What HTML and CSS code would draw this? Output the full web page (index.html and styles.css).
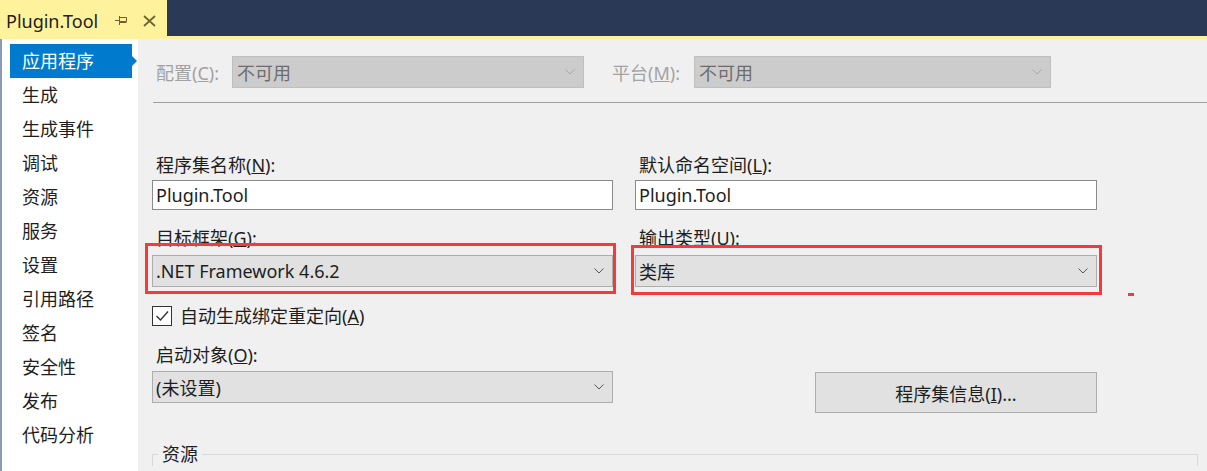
FILE: index.html
```html
<!DOCTYPE html>
<html lang="zh-CN">
<head>
    <meta charset="UTF-8">
    <title>Plugin.Tool</title>
    <link rel="stylesheet" href="styles.css">
</head>
<body>

<div class="titlebar">
    <div class="doc-tab">
        <span class="doc-tab-title">Plugin.Tool</span>
        <svg class="doc-tab-pin" width="13" height="11" viewBox="0 0 13 11">
            <path d="M0 5.5h4.5 M4.5 1v9 M4.5 2.5h7v4h-7 M4.5 7.5h7" fill="none" stroke="#6f6032" stroke-width="1"/>
        </svg>
        <svg class="doc-tab-close" width="13" height="12" viewBox="0 0 13 12">
            <path d="M1 1l11 10 M12 1l-11 10" fill="none" stroke="#6f6032" stroke-width="1.7"/>
        </svg>
    </div>
</div>
<div class="tab-strip"></div>

<div class="workspace">
    <ul class="nav">
        <li class="active">应用程序</li>
        <li>生成</li>
        <li>生成事件</li>
        <li>调试</li>
        <li>资源</li>
        <li>服务</li>
        <li>设置</li>
        <li>引用路径</li>
        <li>签名</li>
        <li>安全性</li>
        <li>发布</li>
        <li>代码分析</li>
    </ul>

    <div class="page">
        <div class="config-row">
            <span class="config-label">配置(<u>C</u>):</span>
            <div class="combo disabled config-combo">
                <span>不可用</span>
                <svg class="chevron" width="10" height="6" viewBox="0 0 10 6"><path d="M0.5 0.5l4.5 4.5 4.5-4.5" fill="none" stroke="#a8a8a8"/></svg>
            </div>
            <span class="config-label second">平台(<u>M</u>):</span>
            <div class="combo disabled platform-combo">
                <span>不可用</span>
                <svg class="chevron" width="10" height="6" viewBox="0 0 10 6"><path d="M0.5 0.5l4.5 4.5 4.5-4.5" fill="none" stroke="#a8a8a8"/></svg>
            </div>
        </div>
        <div class="rule"></div>

        <div class="form-grid">
            <div class="field">
                <label class="field-label" for="asmName">程序集名称(<u>N</u>):</label>
                <input class="text-input" type="text" id="asmName" value="Plugin.Tool">
            </div>
            <div class="field">
                <label class="field-label" for="rootNs">默认命名空间(<u>L</u>):</label>
                <input class="text-input" type="text" id="rootNs" value="Plugin.Tool">
            </div>

            <div class="field row-two marked">
                <span class="field-label">目标框架(<u>G</u>):</span>
                <div class="combo">
                    <span>.NET Framework 4.6.2</span>
                    <svg class="chevron" width="10" height="6" viewBox="0 0 10 6"><path d="M0.5 0.5l4.5 4.5 4.5-4.5" fill="none" stroke="#555"/></svg>
                </div>
                <span class="mark mark-left"></span>
            </div>
            <div class="field row-two marked">
                <span class="field-label">输出类型(<u>U</u>):</span>
                <div class="combo">
                    <span>类库</span>
                    <svg class="chevron" width="10" height="6" viewBox="0 0 10 6"><path d="M0.5 0.5l4.5 4.5 4.5-4.5" fill="none" stroke="#555"/></svg>
                </div>
                <span class="mark mark-right"></span>
            </div>

            <div class="field">
                <div class="check-row">
                    <span class="check-box">
                        <svg width="18" height="18" viewBox="0 0 18 18"><path d="M3.5 9l4 4 7.5-8.5" fill="none" stroke="#333" stroke-width="1.4"/></svg>
                    </span>
                    <span class="check-label">自动生成绑定重定向(<u>A</u>)</span>
                </div>
                <span class="field-label startup-label">启动对象(<u>O</u>):</span>
                <div class="combo startup-combo">
                    <span>(未设置)</span>
                    <svg class="chevron" width="10" height="6" viewBox="0 0 10 6"><path d="M0.5 0.5l4.5 4.5 4.5-4.5" fill="none" stroke="#555"/></svg>
                </div>
            </div>
            <div class="field btn-cell">
                <button class="btn">程序集信息(<u>I</u>)...</button>
            </div>
        </div>

        <fieldset class="group">
            <legend>资源</legend>
        </fieldset>

        <span class="stray-mark"></span>
    </div>
</div>

</body>
</html>
```

FILE: styles.css
```css
body {
    margin: 0;
    width: 1207px;
    height: 471px;
    overflow: hidden;
    background: #f0f0f0;
    color: #1e1e1e;
    font-family: "Noto Sans", "Noto Sans CJK SC", sans-serif;
    font-size: 18px;
}

/* title bar + document tab */
.titlebar {
    display: flex;
    height: 36px;
    background: #2a3a56;
}
.doc-tab {
    display: flex;
    align-items: center;
    box-sizing: border-box;
    width: 167px;
    padding: 5px 0 0 6px;
    background: #fff29d;
}
.doc-tab-title {
    line-height: 24px;
}
.doc-tab-pin {
    margin-left: 17px;
}
.doc-tab-close {
    margin-left: 15px;
}
.tab-strip {
    height: 3px;
    background: #fff29d;
}

.workspace {
    display: flex;
    height: 432px;
    overflow: hidden;
}

/* left navigation */
.nav {
    flex: none;
    width: 136px;
    margin: 0;
    padding: 5px 0 0;
    list-style: none;
    border-left: 2px solid #8d99bb;
    background: #fff;
}
.nav li {
    box-sizing: border-box;
    width: 122px;
    height: 34px;
    margin-left: 8px;
    padding-left: 12px;
    line-height: 34px;
}
.nav .active {
    position: relative;
    background: #007acc;
    color: #fff;
}
.nav .active::after {
    content: "";
    position: absolute;
    left: 100%;
    top: 12px;
    border-left: 5px solid #007acc;
    border-top: 5px solid transparent;
    border-bottom: 5px solid transparent;
}

/* property page */
.page {
    position: relative;
    flex: 1;
    padding: 17px 9px 0 14px;
}

.config-row {
    display: flex;
    align-items: center;
    height: 32px;
}
.config-label {
    box-sizing: border-box;
    width: 80px;
    padding-left: 4px;
    color: #a2a2a2;
}
.config-label.second {
    width: 82px;
    margin-left: 28px;
    padding-left: 0;
}
.config-combo {
    width: 352px;
}
.platform-combo {
    width: 357px;
}

.rule {
    height: 1px;
    margin: 14px -9px 0 1px;
    background: #a0a0a0;
}

.combo {
    display: flex;
    align-items: center;
    justify-content: space-between;
    box-sizing: border-box;
    height: 32px;
    padding: 0 8px 0 3px;
    border: 1px solid #adadad;
    background: #e1e1e1;
}
.combo.disabled {
    padding-left: 4px;
    border-color: #bfbfbf;
    background: #cccccc;
    color: #6d6d6d;
}

.form-grid {
    display: grid;
    grid-template-columns: 461px 462px;
    column-gap: 22px;
    margin-top: 50px;
}
.field {
    position: relative;
}
.field-label {
    display: block;
    padding-left: 4px;
    line-height: 24px;
}
.text-input {
    display: block;
    box-sizing: border-box;
    width: 100%;
    height: 30px;
    margin: 3px 0 0;
    padding: 0 3px;
    border: 1px solid #8a8a8a;
    background: #fff;
    color: inherit;
    font: inherit;
    outline: none;
}

.row-two {
    margin-top: 16px;
}
.row-two .combo {
    margin-top: 5px;
}

/* red annotation boxes drawn over the screenshot */
.mark {
    position: absolute;
    box-sizing: border-box;
    width: 471px;
    border: 3px solid #f23c3c;
}
.mark-left {
    left: -7px;
    top: 17px;
    height: 51px;
}
.mark-right {
    left: -4px;
    top: 19px;
    height: 50px;
}
.stray-mark {
    position: absolute;
    left: 990px;
    top: 254px;
    width: 6px;
    height: 3px;
    background: #f23c3c;
}

.check-row {
    display: flex;
    align-items: center;
    height: 20px;
    margin-top: 19px;
}
.check-box {
    display: flex;
    align-items: center;
    justify-content: center;
    box-sizing: border-box;
    width: 20px;
    height: 20px;
    border: 1px solid #333;
    background: #fff;
}
.check-label {
    margin-left: 8px;
    line-height: 24px;
}
.startup-label {
    margin-top: 17px;
}
.startup-combo {
    margin-top: 4px;
}

.btn-cell {
    display: flex;
    justify-content: flex-end;
    align-items: flex-start;
}
.btn {
    width: 282px;
    height: 41px;
    margin-top: 85px;
    border: 1px solid #adadad;
    background: #e1e1e1;
    color: #1e1e1e;
    font: inherit;
}

/* group box is cut off by the bottom of the window */
.group {
    height: 14px;
    min-width: 0;
    margin: 29px 0 0;
    padding: 0;
    border: 1px solid #d8d8d8;
    border-bottom: 0;
}
.group legend {
    margin-left: 5px;
    padding: 0 4px;
    line-height: 24px;
}
```
